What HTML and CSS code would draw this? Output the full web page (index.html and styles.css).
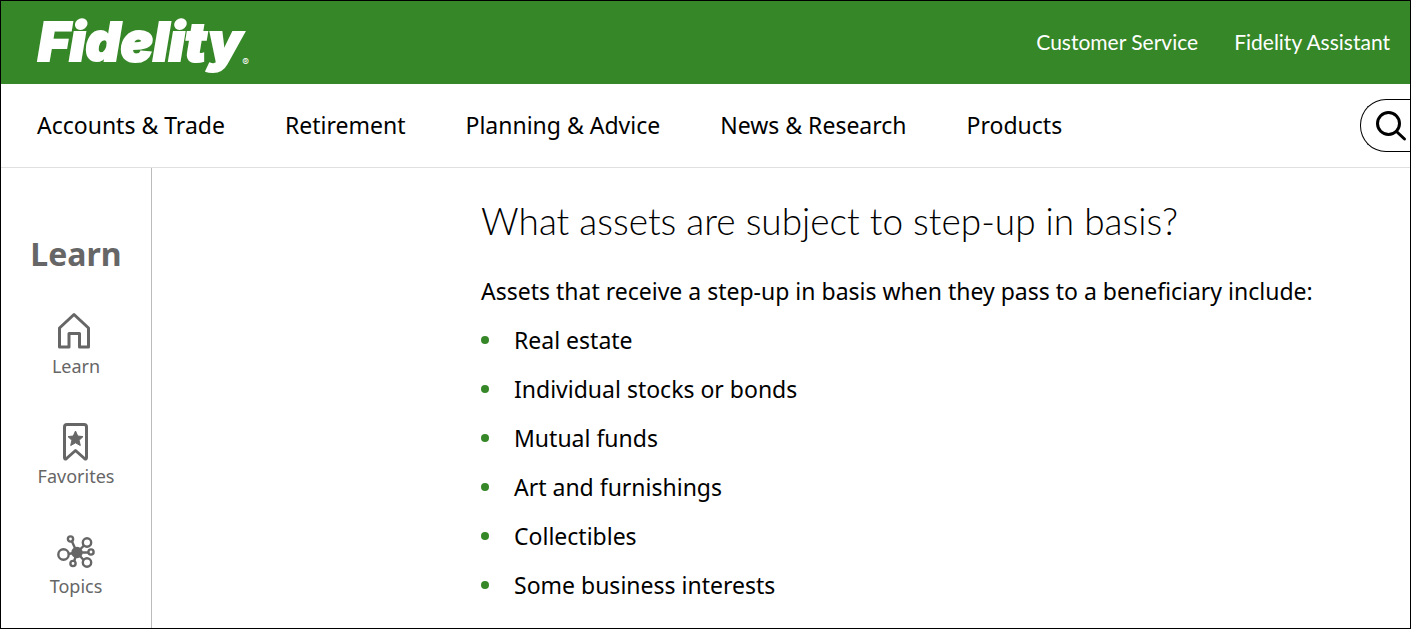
FILE: index.html
```html
<!DOCTYPE html>
<html lang="en">

<head>
    <meta charset="UTF-8">
    <meta name="viewport" content="width=device-width, initial-scale=1.0">
    <title>Step-up in basis | Fidelity</title>
    <link rel="stylesheet" href="styles.css">
</head>

<body>
    <div class="page">
        <!-- Top Bar -->
        <header class="top-bar">
            <a class="logo" href="#">Fidelity<span class="logo-mark">®</span></a>
            <nav class="top-links">
                <a href="#">Customer Service</a>
                <a href="#">Fidelity Assistant</a>
            </nav>
        </header>

        <!-- Main Navigation -->
        <div class="main-nav">
            <nav class="nav-links">
                <a href="#">Accounts &amp; Trade</a>
                <a href="#">Retirement</a>
                <a href="#">Planning &amp; Advice</a>
                <a href="#">News &amp; Research</a>
                <a href="#">Products</a>
            </nav>
            <button class="search-button" type="button" aria-label="Search">
                <svg width="32" height="32" viewBox="0 0 32 32" fill="none" stroke="#000" stroke-width="3" stroke-linecap="round">
                    <circle cx="13.5" cy="13.5" r="11" />
                    <path d="M21.5 21.5L29.5 29" />
                </svg>
            </button>
        </div>

        <div class="layout">
            <!-- Sidebar -->
            <aside class="sidebar">
                <h2>Learn</h2>
                <nav class="side-links">
                    <a href="#">
                        <svg width="40" height="40" viewBox="0 0 40 40" fill="none" stroke="#666" stroke-width="3" stroke-linejoin="round">
                            <path d="M3.500 36V17L18 3.500L32.500 17V36H23.500V22.500H13V36Z" />
                        </svg>
                        <span>Learn</span>
                    </a>
                    <a href="#">
                        <svg width="40" height="40" viewBox="0 0 40 40" fill="none" stroke="#666" stroke-width="3" stroke-linejoin="round">
                            <path d="M8.500 36.500V6Q8.500 3.500 11 3.500H28Q30.500 3.500 30.500 6V36.500Q30.500 39 28.500 37.500L19.500 29.500L10.500 37.500Q8.500 39 8.500 36.500Z" />
                            <path d="M19.500 10L21.700 15L27 15.600L23.100 19.300L24.300 24.500L19.500 21.800L14.700 24.500L15.900 19.300L12 15.600L17.300 15Z" fill="#666" stroke-width="1" />
                        </svg>
                        <span>Favorites</span>
                    </a>
                    <a href="#">
                        <svg width="40" height="40" viewBox="0 0 40 40" fill="none" stroke="#666" stroke-width="2.4">
                            <path d="M21 21.500L16 10.500M21 21.500L28 14.500M21 21.500H32M21 21.500L28 29.500M21 21.500L18 30.500M21 21.500L12 23" />
                            <circle cx="21" cy="21.500" r="4.500" fill="#666" />
                            <circle cx="14.500" cy="8" r="2.600" />
                            <circle cx="31" cy="11.500" r="4.200" />
                            <circle cx="35" cy="21" r="2.600" />
                            <circle cx="31" cy="31.500" r="4.200" />
                            <circle cx="17" cy="32.500" r="2.600" />
                            <circle cx="7.500" cy="23.500" r="5.200" />
                        </svg>
                        <span>Topics</span>
                    </a>
                </nav>
            </aside>

            <!-- Article -->
            <main class="article">
                <h1>What assets are subject to step-up in basis?</h1>
                <p>Assets that receive a step-up in basis when they pass to a beneficiary include:</p>
                <ul>
                    <li>Real estate</li>
                    <li>Individual stocks or bonds</li>
                    <li>Mutual funds</li>
                    <li>Art and furnishings</li>
                    <li>Collectibles</li>
                    <li>Some business interests</li>
                </ul>
            </main>
        </div>
    </div>
</body>

</html>
```

FILE: styles.css
```css
* {
    box-sizing: border-box;
}

body {
    font-family: "Noto Sans", sans-serif;
    background-color: #fff;
    color: #000;
    margin: 0;
}

a {
    color: inherit;
    text-decoration: none;
}

.page {
    display: flex;
    flex-direction: column;
    min-height: calc(100vh - 2px);
    margin: 0 2px 2px 0;
    border: 1px solid #000;
}

.top-bar {
    display: flex;
    justify-content: space-between;
    align-items: center;
    height: 83px;
    padding: 0 20px 0 37px;
    background-color: #368727;
    color: #fff;
}

.logo {
    display: flex;
    align-items: flex-end;
    padding-bottom: 2px;
    font-family: Inter, sans-serif;
    font-size: 54px;
    font-style: italic;
    font-weight: 900;
    line-height: 64px;
    -webkit-text-stroke: 2px #fff;
}

.logo-mark {
    font-size: 10px;
    font-style: normal;
    font-weight: 400;
    line-height: 24px;
    -webkit-text-stroke: 0;
}

.top-links {
    display: flex;
    gap: 36px;
    padding-bottom: 2px;
    font-family: Lato, sans-serif;
    font-size: 21px;
}

.main-nav {
    display: flex;
    justify-content: space-between;
    align-items: center;
    height: 84px;
    padding-left: 36px;
    border-bottom: 1px solid #e0e0e0;
}

.nav-links {
    display: flex;
    gap: 60px;
    padding-bottom: 2px;
    font-size: 23px;
}

.search-button {
    display: flex;
    align-items: center;
    width: 50px;
    height: 53px;
    padding: 0 0 0 14px;
    background: #fff;
    border: 1px solid #000;
    border-right: none;
    border-radius: 26px 0 0 26px;
    cursor: pointer;
}

.search-button svg {
    flex-shrink: 0;
}

.layout {
    display: flex;
    flex: 1;
}

.sidebar {
    width: 151px;
    padding-top: 63px;
    border-right: 1px solid #bbb;
    color: #666;
    text-align: center;
}

.sidebar h2 {
    margin: 0 0 34px;
    font-size: 32px;
    line-height: 46px;
}

.side-links {
    display: flex;
    flex-direction: column;
    gap: 43px;
}

.side-links a {
    display: flex;
    flex-direction: column;
    align-items: center;
    gap: 3px;
    font-size: 18px;
    line-height: 24px;
}

.article {
    flex: 1;
    padding: 26px 24px 0 329px;
}

.article h1 {
    margin: 0 0 25px;
    font-family: Lato, sans-serif;
    font-size: 37px;
    font-weight: 300;
    line-height: 54px;
}

.article p {
    margin: 0;
    font-size: 23px;
    line-height: 36px;
}

.article ul {
    list-style: none;
    margin: 6px 0 0;
    padding: 0;
    font-size: 23px;
}

.article li {
    display: flex;
    align-items: center;
    gap: 25px;
    height: 49px;
}

.article li::before {
    content: "";
    width: 8px;
    height: 8px;
    border-radius: 50%;
    background-color: #368727;
}
```
